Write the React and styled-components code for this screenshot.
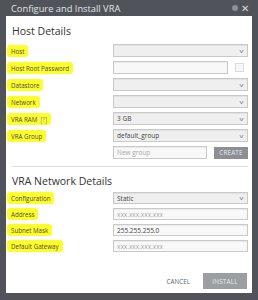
import React from 'react';
import styled, { createGlobalStyle } from 'styled-components';

const Global = createGlobalStyle`
  html, body { margin: 0; padding: 0; background: #50535a; }
  body { font-family: "Open Sans", "Liberation Sans", sans-serif; }
`;

const Window = styled.div`
  width: 258px;
  height: 300px;
  display: flex;
  flex-direction: column;
  background: #50535a;
  box-sizing: border-box;
  padding: 0 6px 7px 6px;
`;

const TitleBar = styled.div`
  height: 16px;
  display: flex;
  align-items: center;
  justify-content: space-between;
  padding: 0 3px 0 5px;
  color: #e2e3e5;
  font-size: 9.3px;
`;

const TitleIcons = styled.div`
  display: flex;
  align-items: center;
  gap: 3px;
  color: #d7d8da;
`;

const HelpDot = styled.span`
  width: 6px;
  height: 6px;
  border-radius: 50%;
  background: #8d9096;
`;

const Close = styled.span`
  font-size: 10px;
  line-height: 10px;
`;

const Body = styled.div`
  flex: 1;
  background: #fff;
  display: flex;
  flex-direction: column;
  padding: 8px 4px 0 6px;
`;

const Heading = styled.div`
  font-size: 10.5px;
  color: #333;
  line-height: 14px;
  margin-bottom: ${p => p.gap}px;
`;

const Row = styled.div`
  display: grid;
  grid-template-columns: 101px 1fr;
  align-items: center;
  height: ${p => p.h}px;
  margin-bottom: 4px;
`;

const Label = styled.span`
  font-size: 6.2px;
  color: #4a4a4a;
  justify-self: start;
  background: ${p => (p.mark ? '#fdfd2a' : 'transparent')};
  border-radius: 3px;
  padding: 2px 4px 1px 4px;
  margin-left: -5px;
`;

const Hint = styled.span`
  color: #7d8fb0;
  margin-left: 3px;
`;

const Field = styled.div`
  height: 100%;
  box-sizing: border-box;
  border: 1px solid #c9c9c9;
  background: ${p => (p.plain ? '#f8f8f8' : '#efefef')};
  box-shadow: inset 0 1px 1px rgba(0, 0, 0, 0.06);
  display: flex;
  align-items: center;
  justify-content: space-between;
  padding: 0 4px 0 3px;
  font-size: 6.5px;
  color: ${p => (p.ph ? '#a9a9a9' : '#444')};
`;

const Chevron = styled.span`
  font-size: 6px;
  color: #777;
  transform: scaleX(1.3);
`;

const Split = styled.div`
  display: flex;
  align-items: center;
  gap: 7px;
  height: 100%;
  > :first-child { flex: 1; }
`;

const Check = styled.span`
  width: 9px;
  height: 9px;
  box-sizing: border-box;
  border: 1px solid #dcdcdc;
  background: #f7f7f7;
  margin-right: 4px;
`;

const GrayButton = styled.button`
  border: none;
  background: ${p => p.bg || '#8c8f94'};
  color: #e9eaec;
  font-family: inherit;
  font-size: 6.3px;
  letter-spacing: 0.2px;
  height: ${p => p.h}px;
  width: ${p => p.w}px;
  padding: 0;
`;

const Divider = styled.hr`
  border: none;
  border-top: 1px solid #dedede;
  margin: 3px 0 7px 0;
`;

const Footer = styled.div`
  margin-top: auto;
  margin-bottom: 4px;
  display: flex;
  justify-content: flex-end;
  align-items: center;
  gap: 13px;
  padding-right: 1px;
`;

const TextButton = styled.span`
  font-size: 6.3px;
  color: #5b6470;
`;

const Select = ({ value, ph }) => (
  <Field ph={ph}>
    <span>{value}</span>
    <Chevron>v</Chevron>
  </Field>
);

const hostRows = [
  { label: 'Host', type: 'select' },
  { label: 'Host Root Password', type: 'password' },
  { label: 'Datastore', type: 'select' },
  { label: 'Network', type: 'select' },
  { label: 'VRA RAM', hint: '[?]', type: 'select', value: '3 GB' },
  { label: 'VRA Group', type: 'select', value: 'default_group' },
];

const netRows = [
  { label: 'Configuration', type: 'select', value: 'Static' },
  { label: 'Address', type: 'input', value: 'xxx.xxx.xxx.xxx', ph: true },
  { label: 'Subnet Mask', type: 'input', value: '255.255.255.0' },
  { label: 'Default Gateway', type: 'input', value: 'xxx.xxx.xxx.xxx', ph: true },
];

const renderControl = (r) => {
  if (r.type === 'select') return <Select value={r.value} ph={r.ph} />;
  if (r.type === 'password')
    return (
      <Split>
        <Field plain />
        <Check />
      </Split>
    );
  return <Field plain ph={r.ph}>{r.value}</Field>;
};

export default function App() {
  return (
    <>
      <Global />
      <Window>
        <TitleBar>
          <span>Configure and Install VRA</span>
          <TitleIcons>
            <HelpDot />
            <Close>✕</Close>
          </TitleIcons>
        </TitleBar>
        <Body>
          <Heading gap={6}>Host Details</Heading>
          {hostRows.map(r => (
            <Row key={r.label} h={13}>
              <Label mark>
                {r.label}
                {r.hint && <Hint>{r.hint}</Hint>}
              </Label>
              {renderControl(r)}
            </Row>
          ))}
          <Row h={13}>
            <span />
            <Split>
              <Field plain ph>New group</Field>
              <GrayButton w={34} h={12}>CREATE</GrayButton>
            </Split>
          </Row>
          <Divider />
          <Heading gap={4}>VRA Network Details</Heading>
          {netRows.map(r => (
            <Row key={r.label} h={12}>
              <Label mark>{r.label}</Label>
              {renderControl(r)}
            </Row>
          ))}
          <Footer>
            <TextButton>CANCEL</TextButton>
            <GrayButton w={44} h={16} bg="#9b9ea3">INSTALL</GrayButton>
          </Footer>
        </Body>
      </Window>
    </>
  );
}
